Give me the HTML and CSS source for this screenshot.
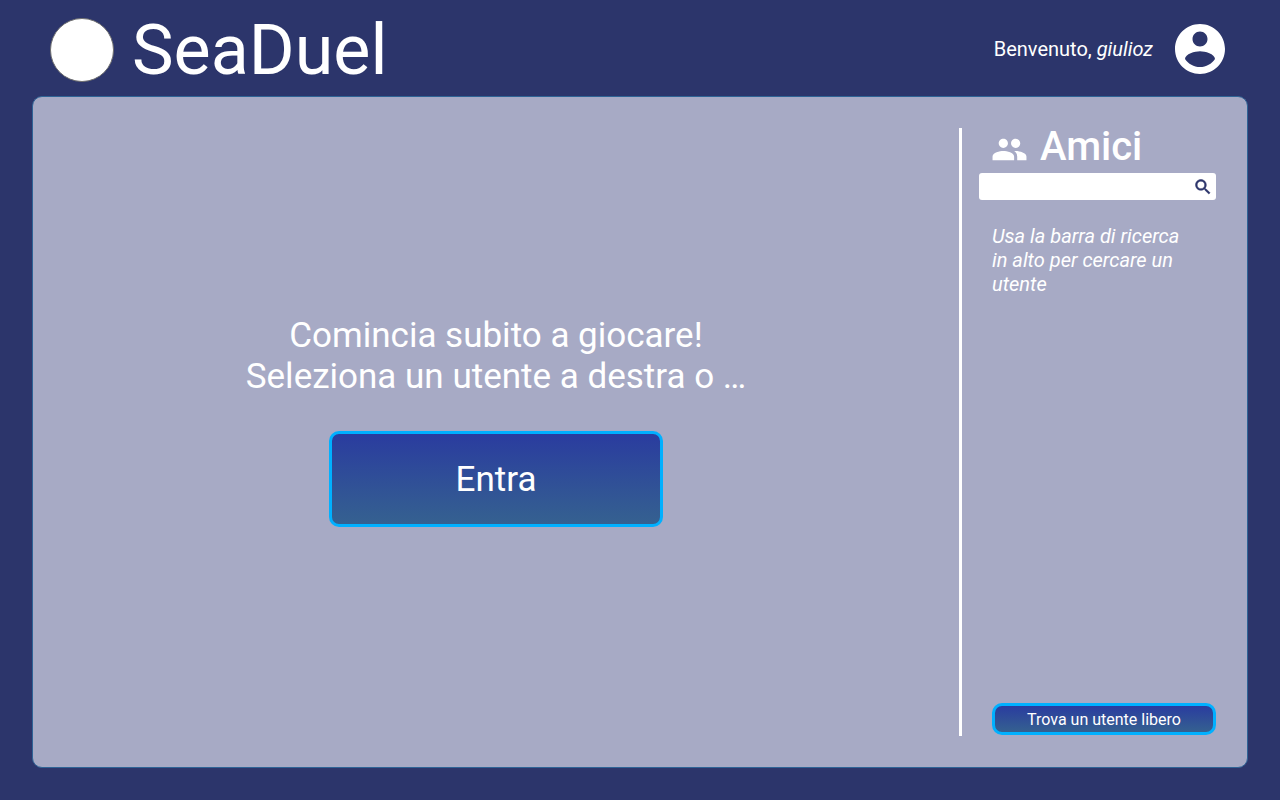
FILE: index.html
```html
<!DOCTYPE html>
<html lang="it">
<head>
<meta charset="utf-8">
<meta name="viewport" content="width=device-width, initial-scale=1">
<title>SeaDuel</title>
<link rel="stylesheet" href="styles.css">
</head>
<body class="page">
<header class="header">
  <div class="brand">
    <span class="brand-mark"></span>
    <h1 class="brand-name">SeaDuel</h1>
  </div>
  <div class="account">
    <span class="welcome">Benvenuto, <em>giulioz</em></span>
    <button class="icon-button" type="button" aria-label="Profilo">
      <svg class="account-icon" viewBox="0 0 24 24"><path d="M12 2C6.48 2 2 6.48 2 12s4.48 10 10 10 10-4.48 10-10S17.52 2 12 2zm0 3c1.66 0 3 1.34 3 3s-1.34 3-3 3-3-1.34-3-3 1.34-3 3-3zm0 14.2c-2.5 0-4.71-1.28-6-3.22.03-1.99 4-3.08 6-3.08 1.99 0 5.97 1.09 6 3.08-1.29 1.94-3.5 3.22-6 3.22z"/></svg>
    </button>
  </div>
</header>
<main class="panel">
  <section class="lobby">
    <p class="lobby-text">Comincia subito a giocare!<br>Seleziona un utente a destra o …</p>
    <button class="button button-large" type="button">Entra</button>
  </section>
  <aside class="friends">
    <h2 class="friends-title">
      <svg class="group-icon" viewBox="0 0 24 24"><path d="M16 11c1.66 0 2.99-1.34 2.99-3S17.66 5 16 5c-1.66 0-3 1.34-3 3s1.34 3 3 3zm-8 0c1.66 0 2.99-1.34 2.99-3S9.66 5 8 5C6.34 5 5 6.34 5 8s1.34 3 3 3zm0 2c-2.33 0-7 1.17-7 3.5V19h14v-2.5c0-2.33-4.67-3.5-7-3.5zm8 0c-.29 0-.62.02-.97.05 1.16.84 1.97 1.97 1.97 3.45V19h6v-2.5c0-2.33-4.67-3.5-7-3.5z"/></svg>
      Amici
    </h2>
    <form class="search">
      <input class="search-input" type="text" aria-label="Cerca un utente">
      <button class="icon-button" type="button" aria-label="Cerca">
        <svg class="search-icon" viewBox="0 0 24 24"><path d="M15.5 14h-.79l-.28-.27C15.41 12.59 16 11.11 16 9.5 16 5.91 13.09 3 9.5 3S3 5.91 3 9.5 5.91 16 9.5 16c1.61 0 3.09-.59 4.23-1.57l.27.28v.79l5 4.99L20.49 19l-4.99-5zm-6 0C7.01 14 5 11.99 5 9.5S7.01 5 9.5 5 14 7.01 14 9.5 11.99 14 9.5 14z"/></svg>
      </button>
    </form>
    <p class="hint">Usa la barra di ricerca in alto per cercare un utente</p>
    <button class="button button-small" type="button">Trova un utente libero</button>
  </aside>
</main>
</body>
</html>
```
FILE: styles.css
```css
* {
  box-sizing: border-box;
}

.page {
  display: flex;
  flex-direction: column;
  min-height: 100vh;
  margin: 0;
  padding: 0 32px 32px;
  background: #2c356b;
  color: #fff;
  font-family: Roboto, sans-serif;
}

.header {
  display: flex;
  align-items: center;
  justify-content: space-between;
  height: 96px;
  padding: 2px 18px 0;
}

.brand,
.account {
  display: flex;
  align-items: center;
}

.brand {
  gap: 18px;
  padding-top: 2px;
}

.brand-mark {
  width: 64px;
  height: 64px;
  border: 1px solid #707070;
  border-radius: 50%;
  background: #fff;
}

.brand-name {
  margin: 0;
  font-size: 70px;
  font-weight: 400;
  line-height: 82px;
}

.account {
  gap: 17px;
}

.welcome {
  font-size: 20px;
  line-height: 24px;
}

.icon-button {
  display: flex;
  padding: 0;
  border: 0;
  background: none;
  color: inherit;
  cursor: pointer;
}

.account-icon {
  width: 60px;
  height: 60px;
  fill: #fff;
}

.panel {
  display: flex;
  flex: 1;
  padding: 31px 31px 31px 0;
  border: 1px solid #2f6496;
  border-radius: 10px;
  background: #a7aac5;
}

.lobby {
  display: flex;
  flex: 1;
  flex-direction: column;
  align-items: center;
  justify-content: center;
  gap: 34px;
  padding-bottom: 22px;
}

.lobby-text {
  margin: 0;
  font-size: 35px;
  line-height: 41px;
  text-align: center;
}

.button {
  border: 3px solid #00b0ff;
  border-radius: 10px;
  background: linear-gradient(#2a3c9f, #356190);
  color: #fff;
  font-family: inherit;
  cursor: pointer;
}

.button-large {
  width: 334px;
  height: 96px;
  font-size: 35px;
}

.button-small {
  height: 32px;
  margin: auto 0 1px 13px;
  padding: 0;
  font-size: 16px;
}

.friends {
  display: flex;
  flex-direction: column;
  width: 257px;
  padding-left: 17px;
  border-left: 3px solid #fff;
}

.friends-title {
  display: flex;
  align-items: flex-start;
  gap: 12px;
  margin: 0 0 5px 12px;
  font-size: 40px;
  font-weight: 500;
  line-height: 37px;
}

.group-icon {
  width: 37px;
  height: 37px;
  margin-top: 3px;
  fill: #fff;
}

.search {
  display: flex;
  align-items: center;
  height: 27px;
  padding-right: 3px;
  border-radius: 3px;
  background: #fff;
  color: #2c356b;
}

.search-input {
  flex: 1;
  min-width: 0;
  height: 100%;
  padding: 0 8px;
  border: 0;
  outline: 0;
  background: none;
  color: inherit;
  font: 16px Roboto, sans-serif;
}

.search-icon {
  width: 20px;
  height: 20px;
  fill: #2c356b;
  stroke: #2c356b;
  stroke-width: 0.6;
}

.hint {
  margin: 24px 28px 24px 13px;
  font-size: 20px;
  font-style: italic;
  line-height: 24px;
}
```
